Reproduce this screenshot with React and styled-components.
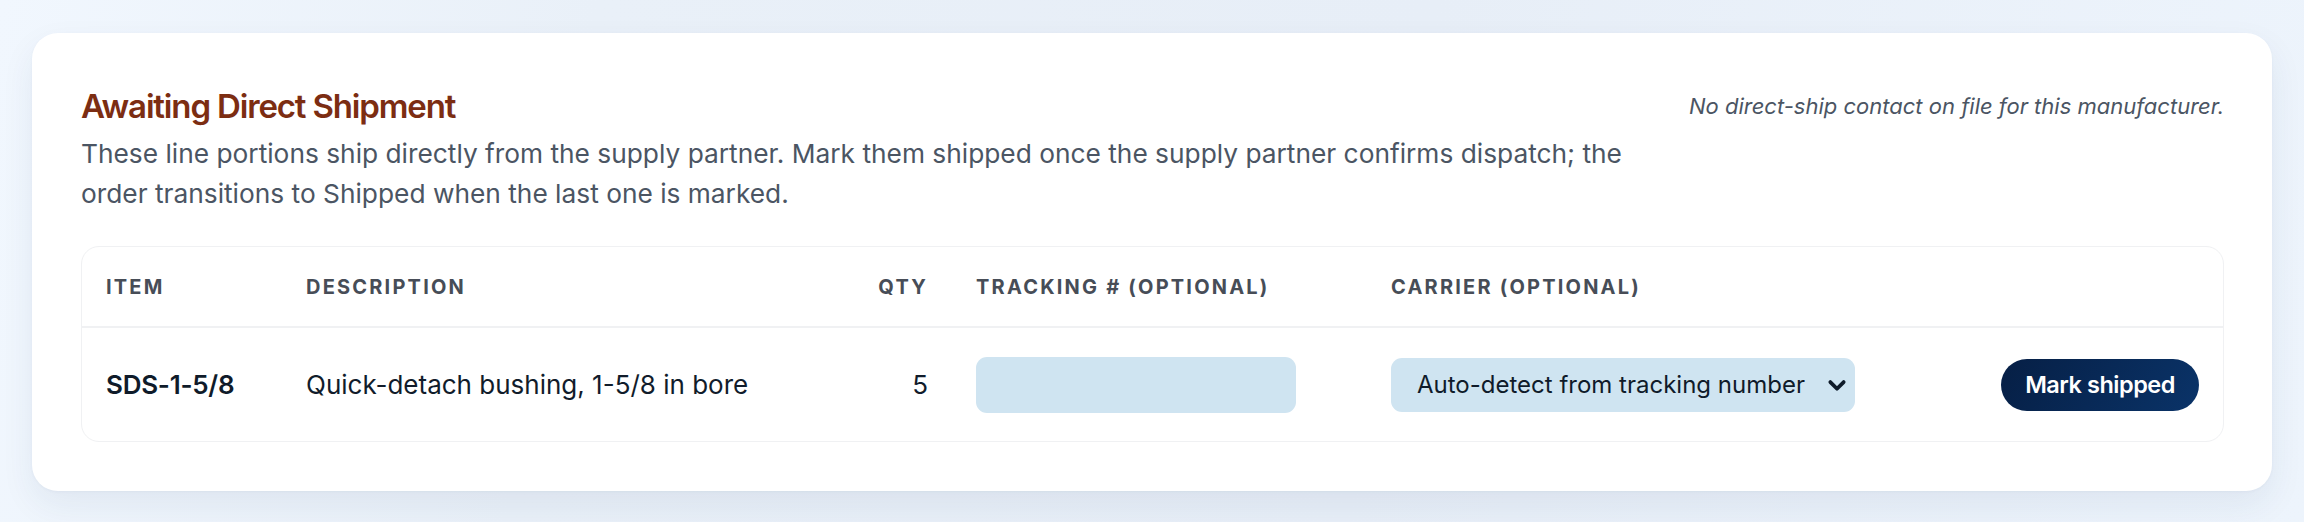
import React from "react";
import styled, { createGlobalStyle } from "styled-components";

const GlobalStyle = createGlobalStyle`
  * { box-sizing: border-box; }
  html, body { margin: 0; padding: 0; }
  body {
    font-family: Inter, "Noto Sans", "Liberation Sans", sans-serif;
    background: linear-gradient(100deg, #f1f7fe 0%, #e9f0f8 25%, #e7eef7 60%, #edf4fc 100%);
    min-height: 522px;
    color: #1f2937;
  }
`;

const Page = styled.div`
  padding: 33px 32px 31px;
`;

const Card = styled.section`
  background: #ffffff;
  border-radius: 26px;
  padding: 51px 48px 49px 49px;
  box-shadow: 0 14px 34px rgba(30, 58, 100, 0.07), 0 1px 3px rgba(30, 58, 100, 0.04);
  display: flex;
  flex-direction: column;
  gap: 32px;
`;

const Header = styled.header`
  display: flex;
  justify-content: space-between;
  align-items: flex-start;
  gap: 40px;
`;

const Intro = styled.div`
  max-width: 1590px;
  display: flex;
  flex-direction: column;
  gap: 6px;
`;

const Title = styled.h2`
  margin: 0;
  font-size: 33px;
  line-height: 44px;
  font-weight: 600;
  letter-spacing: -0.035em;
  color: #7c2d12;
`;

const Lead = styled.p`
  margin: 0;
  font-size: 26.3px;
  line-height: 40px;
  color: #4b5563;
`;

const Note = styled.p`
  margin: 0;
  padding-top: 9px;
  font-size: 22px;
  line-height: 26px;
  font-style: italic;
  color: #4b5563;
  white-space: nowrap;
`;

const Table = styled.div`
  border: 1.5px solid #f0f1f3;
  border-radius: 18px;
  overflow: hidden;
`;

const Row = styled.div`
  display: grid;
  grid-template-columns: 200px 1fr 100px 415px 514px 342px;
  align-items: center;
  min-height: ${(p) => (p.$head ? "79px" : "115px")};
  border-top: ${(p) => (p.$head ? "none" : "2.5px solid #f0f1f3")};
`;

const Cell = styled.div`
  padding: 0 24px;
  text-align: ${(p) => p.$align || "left"};
`;

const HeadCell = styled(Cell)`
  font-size: 20px;
  font-weight: 700;
  letter-spacing: 0.11em;
  text-transform: uppercase;
  color: #474d57;
`;

const Sku = styled(Cell)`
  font-size: 26px;
  font-weight: 600;
  letter-spacing: -0.01em;
  color: #0f1b2a;
`;

const Text = styled(Cell)`
  font-size: 26px;
  color: #111c2b;
`;

const TrackingInput = styled.input`
  width: 320px;
  height: 56px;
  border: none;
  border-radius: 11px;
  background: #cfe4f1;
  padding: 0 24px;
  font: inherit;
  font-size: 24px;
  color: #0f1b2a;
  outline: none;
`;

const SelectWrap = styled.div`
  position: relative;
  width: 464px;
`;

const Select = styled.select`
  appearance: none;
  -webkit-appearance: none;
  width: 100%;
  height: 54px;
  border: none;
  border-radius: 11px;
  background: #cfe4f1;
  padding: 0 36px 0 26px;
  font-family: Inter, "Noto Sans", sans-serif;
  font-size: 24px;
  color: #0f1b2a;
  outline: none;
`;

const Chevron = styled.svg`
  position: absolute;
  right: 8px;
  top: 50%;
  width: 20px;
  height: 20px;
  transform: translateY(-50%);
  pointer-events: none;
`;

const ActionCell = styled(Cell)`
  display: flex;
  justify-content: flex-end;
`;

const ShipButton = styled.button`
  height: 52px;
  padding: 0 24px;
  border: none;
  border-radius: 999px;
  background: linear-gradient(120deg, #061f45 0%, #0a3368 100%);
  color: #ffffff;
  font-family: Inter, "Noto Sans", sans-serif;
  font-size: 23.5px;
  font-weight: 600;
  letter-spacing: -0.02em;
  cursor: pointer;
`;

const lines = [
  { sku: "SDS-1-5/8", description: "Quick-detach bushing, 1-5/8 in bore", qty: 5 },
];

export default function App() {
  return (
    <>
      <GlobalStyle />
      <Page>
        <Card>
          <Header>
            <Intro>
              <Title>Awaiting Direct Shipment</Title>
              <Lead>
                These line portions ship directly from the supply partner. Mark them shipped once the
                supply partner confirms dispatch; the order transitions to Shipped when the last one is
                marked.
              </Lead>
            </Intro>
            <Note>No direct-ship contact on file for this manufacturer.</Note>
          </Header>

          <Table>
            <Row $head>
              <HeadCell>Item</HeadCell>
              <HeadCell>Description</HeadCell>
              <HeadCell $align="right">Qty</HeadCell>
              <HeadCell>Tracking # (optional)</HeadCell>
              <HeadCell>Carrier (optional)</HeadCell>
              <HeadCell />
            </Row>
            {lines.map((line) => (
              <Row key={line.sku}>
                <Sku>{line.sku}</Sku>
                <Text>{line.description}</Text>
                <Text $align="right">{line.qty}</Text>
                <Cell>
                  <TrackingInput type="text" aria-label="Tracking number" />
                </Cell>
                <Cell>
                  <SelectWrap>
                    <Select aria-label="Carrier" defaultValue="auto">
                      <option value="auto">Auto-detect from tracking number</option>
                      <option value="ups">UPS</option>
                      <option value="fedex">FedEx</option>
                      <option value="usps">USPS</option>
                    </Select>
                    <Chevron viewBox="0 0 24 24" fill="none">
                      <path
                        d="M4 8.5l8 8 8-8"
                        stroke="#0f1b2a"
                        strokeWidth="4.5"
                        strokeLinecap="round"
                        strokeLinejoin="round"
                      />
                    </Chevron>
                  </SelectWrap>
                </Cell>
                <ActionCell>
                  <ShipButton type="button">Mark shipped</ShipButton>
                </ActionCell>
              </Row>
            ))}
          </Table>
        </Card>
      </Page>
    </>
  );
}
